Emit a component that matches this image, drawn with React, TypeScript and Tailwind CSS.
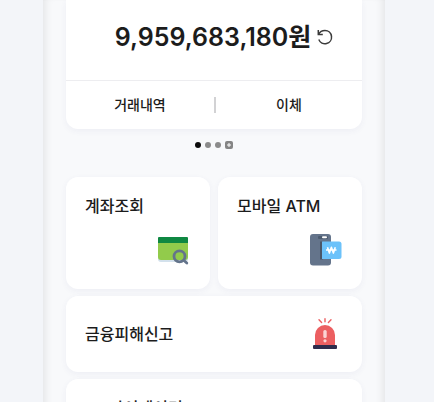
import type { ReactNode } from 'react';

interface MenuCardProps {
  title: string;
  icon?: ReactNode;
  wide?: boolean;
}

const ACTIONS = ['거래내역', '이체'];

function RefreshIcon() {
  return (
    <svg viewBox="0 0 16 16" className="size-4" fill="none" stroke="#3b3b3b" strokeWidth="1.5" aria-hidden="true">
      <path d="M1.300 1v4.500h4.500" />
      <path d="M1.500 5.400C2.800 2.900 5.200 1.500 8 1.500a6.600 6.600 0 1 1-6.200 9" />
    </svg>
  );
}

function AccountIcon() {
  return (
    <svg viewBox="0 0 32 32" className="size-8" aria-hidden="true">
      <path d="M0 9h30v16a3 3 0 0 1-3 3H3a3 3 0 0 1-3-3z" fill="#d3e1ec" />
      <path d="M0 8h30v15a3 3 0 0 1-3 3H3a3 3 0 0 1-3-3z" fill="#92cb4b" />
      <path d="M1 3h28a1 1 0 0 1 1 1v5H0V4a1 1 0 0 1 1-1z" fill="#0f8842" />
      <circle cx="21.500" cy="22.300" r="5.500" fill="none" stroke="#64748b" strokeWidth="2.800" />
      <path d="m26 26.500 2.800 2.500" stroke="#64748b" strokeWidth="2.800" strokeLinecap="round" />
    </svg>
  );
}

function AtmIcon() {
  return (
    <svg viewBox="0 0 32 32" className="size-8" aria-hidden="true">
      <rect x="0" y="0" width="21" height="31.500" rx="3" fill="#64748b" />
      <rect x="8" y="2" width="10" height="3" rx="1" fill="#4c5b6f" />
      <rect x="12" y="2.300" width="5" height="2" rx="1" fill="#ffffff" />
      <path d="M10 7.500h3v18h-3z" fill="#4a5668" />
      <path d="M12 7.500h17a2.500 2.500 0 0 1 2.500 2.500v12.500a2.500 2.500 0 0 1-2.500 2.500H12z" fill="#6cc2fa" />
      <path
        d="m17.500 13.300 1.900 5.800 2-5.800 2 5.800 1.900-5.800M16 16h10.500"
        fill="none"
        stroke="#ffffff"
        strokeWidth="1.600"
        strokeLinejoin="round"
      />
    </svg>
  );
}

function SirenIcon() {
  return (
    <svg viewBox="0 0 32 32" className="size-8" aria-hidden="true">
      <path d="M16 .7v3M10 1.700l2.600 2.800M22 1.700l-2.600 2.800" stroke="#ec5f61" strokeWidth="1.400" strokeLinecap="round" />
      <path d="M6 27.500V17a10 10 0 0 1 20 0v10.500z" fill="#ec5f61" />
      <rect x="14.300" y="12" width="3.400" height="8" rx="1.500" fill="#fbd3d3" />
      <circle cx="16" cy="22.800" r="1.600" fill="#fbd3d3" />
      <rect x="4" y="27" width="24" height="4" rx="1" fill="#2f2c4c" />
    </svg>
  );
}

function MenuCard({ title, icon, wide = false }: MenuCardProps) {
  return (
    <button
      type="button"
      className={
        wide
          ? 'col-span-2 flex h-19 items-center justify-between rounded-xl bg-white pr-5 pl-[19px] shadow-[0_2px_6px_rgba(60,70,140,0.06)]'
          : 'flex h-28 flex-col justify-between rounded-xl bg-white pt-[17px] pr-5 pb-[23px] pl-[19px] text-left shadow-[0_2px_6px_rgba(60,70,140,0.06)]'
      }
    >
      <span className="text-base leading-6 font-medium">{title}</span>
      {icon && <span className={wide ? 'mr-px' : 'self-end'}>{icon}</span>}
    </button>
  );
}

export default function App() {
  return (
    <div className="h-screen overflow-hidden bg-[#f3f5f9] pr-[49px] pl-[43px] font-['Inter','Noto_Sans_CJK_KR',sans-serif] text-[#1c1c1c]">
      <main className="min-h-screen bg-[#f8f9fb] px-[23px] shadow-[inset_8px_0_8px_-6px_rgba(0,0,0,0.09),inset_-8px_0_8px_-6px_rgba(0,0,0,0.09)]">
        <section className="rounded-b-xl bg-white shadow-[0_2px_6px_rgba(60,70,140,0.06)]">
          <div className="flex h-20 items-center justify-center gap-1.5 pb-1.5 pl-5">
            <strong className="text-[25px] leading-8 font-semibold">9,959,683,180원</strong>
            <button type="button" aria-label="새로고침">
              <RefreshIcon />
            </button>
          </div>
          <div className="grid grid-cols-2 border-t border-[#ededf0] py-4">
            {ACTIONS.map((action, i) => (
              <button
                key={action}
                type="button"
                className={
                  i > 0
                    ? 'h-4 border-l-2 border-[#d2d2d4] text-sm leading-4 font-medium'
                    : 'h-4 text-sm leading-4 font-medium'
                }
              >
                {action}
              </button>
            ))}
          </div>
        </section>

        <div className="flex h-12 items-start justify-center gap-1 pt-3">
          <span className="mt-px size-1.5 rounded-full bg-[#0b0b0b]" />
          <span className="mt-px size-1.5 rounded-full bg-[#8b8b8b]" />
          <span className="mt-px size-1.5 rounded-full bg-[#8b8b8b]" />
          <svg viewBox="0 0 8 8" className="size-2" aria-hidden="true">
            <rect width="8" height="8" rx="2" fill="#858585" />
            <path d="M4 2v4M2 4h4" stroke="#ffffff" strokeWidth="1" />
          </svg>
        </div>

        <nav className="grid grid-cols-2 gap-x-2 gap-y-[7px]">
          <MenuCard title="계좌조회" icon={<AccountIcon />} />
          <MenuCard title="모바일 ATM" icon={<AtmIcon />} />
          <MenuCard title="금융피해신고" icon={<SirenIcon />} wide />
          <button
            type="button"
            className="col-span-2 flex h-28 items-start rounded-xl bg-white pt-[17px] pl-[19px] shadow-[0_2px_6px_rgba(60,70,140,0.06)]"
          >
            <span className="text-base leading-6 font-medium">NH마이데이터</span>
          </button>
        </nav>
      </main>
    </div>
  );
}
